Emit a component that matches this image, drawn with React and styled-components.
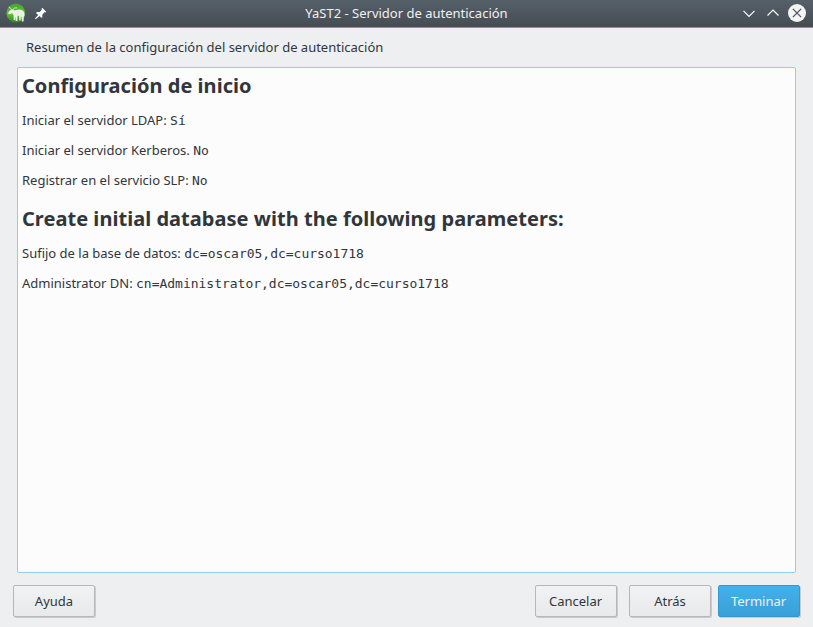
import React from "react";
import styled, { createGlobalStyle } from "styled-components";

const GlobalStyle = createGlobalStyle`
  * { box-sizing: border-box; }
  html, body { margin: 0; height: 100%; overflow: hidden; }
  body { background: #eeeff1; }
`;

const Window = styled.div`
  display: flex;
  flex-direction: column;
  width: 813px;
  height: 627px;
  background: #eeeff1;
  color: #31363b;
  font: 13px/18px "Noto Sans", sans-serif;
  white-space: nowrap;
`;

const TitleBar = styled.header`
  display: grid;
  grid-template-columns: 140px 1fr 140px;
  align-items: center;
  flex: none;
  height: 28px;
  padding: 0 7px 1px 6px;
  background: linear-gradient(#566069, #454c54);
  border-bottom: 1px solid #3daee9;
`;

const Title = styled.h1`
  margin: 0;
  padding-left: 1px;
  color: #eff0f1;
  font: inherit;
  line-height: 18px;
  text-align: center;
`;

const TitleGroup = styled.div`
  display: flex;
  align-items: center;
  justify-content: ${(p) => (p.$end ? "flex-end" : "flex-start")};
  gap: ${(p) => (p.$end ? "6px" : "8px")};

  svg { display: block; }
`;

const Caption = styled.div`
  flex: none;
  height: 39px;
  padding: 10px 26px 0;
`;

const Summary = styled.main`
  flex: none;
  height: 506px;
  margin: 0 17px;
  padding: 4px;
  background: #fcfcfc;
  border: 1px solid #93cee9;
  border-radius: 2px;
`;

const Heading = styled.h2`
  margin: ${(p) => (p.$next ? "16px" : "0")} 0 12px;
  font-size: 20px;
  line-height: 27px;
  font-weight: 700;
  letter-spacing: 0.035px;
`;

const Entry = styled.p`
  margin: 0 0 12px;
  height: 18px;
`;

const Value = styled.code`
  font: 13px/18px "DejaVu Sans Mono", monospace;
  letter-spacing: -0.015px;
`;

const Footer = styled.footer`
  display: flex;
  padding: 12px 13px 0;
`;

const Button = styled.button`
  width: 82px;
  height: 32px;
  margin: 0 ${(p) => p.$gap || 0}px 0 0;
  padding: 0 ${(p) => p.$inset || 0}px 1px 0;
  border: 1px solid ${(p) => (p.$primary ? "#3498d0" : "#b5b7b9")};
  border-radius: 2px;
  background: ${(p) =>
    p.$primary ? "linear-gradient(#42b1ec, #3a9fd7)" : "linear-gradient(#f1f2f3, #e8e9ea)"};
  box-shadow: 1px 1px 0 rgba(0, 0, 0, 0.15);
  color: ${(p) => (p.$primary ? "#eff0f1" : "#31363b")};
  font: inherit;
`;

const Spacer = styled.div`
  flex: 1;
`;

const GeckoIcon = () => (
  <svg width="20" height="20" viewBox="0 0 20 20">
    <defs>
      <linearGradient id="leaf" x1="0" y1="0" x2="0" y2="1">
        <stop offset="0" stopColor="#48a52b" />
        <stop offset="0.55" stopColor="#61bd36" />
        <stop offset="1" stopColor="#2f8c24" />
      </linearGradient>
    </defs>
    <circle cx="9.8" cy="10" r="9.4" fill="url(#leaf)" />
    <path
      d="M2.2 9.6 4.2 7.2 6.2 6.6 9 7.2 13 6.6 16 7 18 8.8 18.6 12.5 17.9 13.5 17.5 18.4H15.8L15.5 14 14.9 13.8 14.6 17.6H13.3L13 12.7 11.7 12.8 11.3 18H9.7L9.5 13.5 9 17H7.7L7.5 12 6.2 10.2 3.8 11.2 2.2 10.8Z"
      fill="#eceee8"
    />
    <path d="M5.8 7.2Q4.8 4.6 2.8 4.2M6.4 7Q8 4.4 11 4.8" fill="none" stroke="#dce9d5" strokeWidth="0.9" />
  </svg>
);

const PinIcon = () => (
  <svg width="13" height="13" viewBox="0 0 13 13" fill="#fcfcfc">
    <path d="m8.3.8 3.9 3.9-1 .7-.7-.2-2.2 2.5.1 2.4-.9.9-2-2.1L1.7 12.2 1 11.5l3.2-3.5L2 5.9l1-.9 2.6.1L7.9 2.8 7.5 1.8Z" />
  </svg>
);

const Chevron = ({ up }) => (
  <svg width="18" height="18" viewBox="0 0 18 18">
    <path
      d={up ? "M3.5 11.5 9 6l5.5 5.5" : "M3.5 6.8 9 12.3l5.5-5.5"}
      fill="none"
      stroke="#fcfcfc"
      strokeWidth="1.2"
    />
  </svg>
);

const CloseIcon = () => (
  <svg width="18" height="18" viewBox="0 0 18 18">
    <circle cx="9" cy="9" r="9" fill="#f3f4f4" />
    <path d="m4.9 4.9 8.2 8.2m0-8.2-8.2 8.2" fill="none" stroke="#4b535b" strokeWidth="1.3" />
  </svg>
);

export default function App() {
  return (
    <>
      <GlobalStyle />
      <Window>
        <TitleBar>
          <TitleGroup>
            <GeckoIcon />
            <PinIcon />
          </TitleGroup>
          <Title>YaST2 - Servidor de autenticación</Title>
          <TitleGroup $end>
            <Chevron />
            <Chevron up />
            <CloseIcon />
          </TitleGroup>
        </TitleBar>
        <Caption>Resumen de la configuración del servidor de autenticación</Caption>
        <Summary>
          <Heading>Configuración de inicio</Heading>
          <Entry>Iniciar el servidor LDAP: <Value>Sí</Value></Entry>
          <Entry>Iniciar el servidor Kerberos. <Value>No</Value></Entry>
          <Entry>Registrar en el servicio SLP: <Value>No</Value></Entry>
          <Heading $next>Create initial database with the following parameters:</Heading>
          <Entry>Sufijo de la base de datos: <Value>dc=oscar05,dc=curso1718</Value></Entry>
          <Entry>Administrator DN: <Value>cn=Administrator,dc=oscar05,dc=curso1718</Value></Entry>
        </Summary>
        <Footer>
          <Button>Ayuda</Button>
          <Spacer />
          <Button $gap={12} $inset={1}>Cancelar</Button>
          <Button $gap={7}>Atrás</Button>
          <Button $primary $inset={1}>Terminar</Button>
        </Footer>
      </Window>
    </>
  );
}
